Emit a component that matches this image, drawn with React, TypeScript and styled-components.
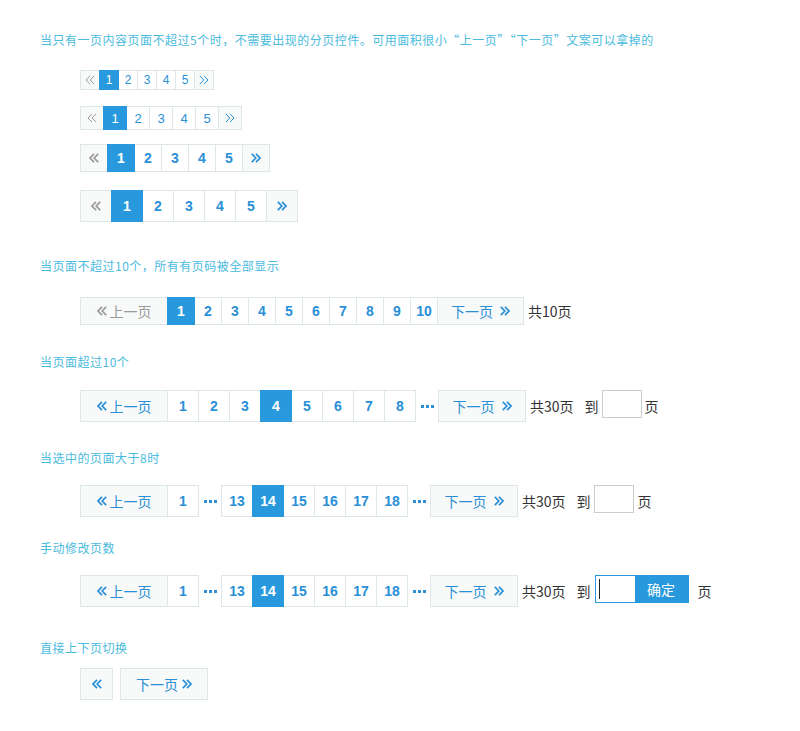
import React from 'react';
import styled, { createGlobalStyle } from 'styled-components';

const BLUE = '#2899dd';
const NUM = '#2a8fd6';
const BORDER = '#dde6e9';
const NAVBG = '#f8f9f9';
const GRAY = '#9a9a9a';
const TITLE = '#4abbdd';
const CJK = '"Noto Sans CJK SC", "Liberation Sans", sans-serif';
const LATIN = '"Liberation Sans", "Noto Sans CJK SC", sans-serif';

const GlobalStyle = createGlobalStyle`
  html, body { margin: 0; padding: 0; background: #fff; }
  body { font-family: ${LATIN}; }
`;

type SizeKey = 'xs' | 'sm' | 'md' | 'lg';
const S: Record<SizeKey, { h: number; fs: number; bold: boolean; sw: number }> = {
  xs: { h: 20, fs: 12, bold: false, sw: 1 },
  sm: { h: 24, fs: 13, bold: false, sw: 1 },
  md: { h: 28, fs: 14, bold: true, sw: 1.7 },
  lg: { h: 32, fs: 14, bold: true, sw: 1.7 },
};

const Page = styled.div`
  padding: 30px 0 30px 40px;
  display: flex;
  flex-direction: column;
  align-items: flex-start;
`;

const Title = styled.div<{ $top: number }>`
  margin-top: ${p => p.$top}px;
  height: 20px;
  line-height: 20px;
  font-family: ${CJK};
  font-size: 12px;
  letter-spacing: 0.5px;
  color: ${TITLE};
  white-space: nowrap;
`;

const Pager = styled.div<{ $top: number; $gap?: number }>`
  margin-top: ${p => p.$top}px;
  margin-left: 40px;
  display: flex;
  align-items: center;
  gap: ${p => p.$gap ?? 0}px;
`;

const Cell = styled.span<{ $size: SizeKey; $active?: boolean; $w?: number }>`
  box-sizing: border-box;
  display: inline-flex;
  align-items: center;
  justify-content: center;
  flex: none;
  height: ${p => S[p.$size].h}px;
  width: ${p => p.$w ?? S[p.$size].h}px;
  border: 1px solid ${p => (p.$active ? BLUE : BORDER)};
  background: ${p => (p.$active ? BLUE : '#fff')};
  color: ${p => (p.$active ? '#fff' : NUM)};
  font-family: ${LATIN};
  font-size: ${p => S[p.$size].fs}px;
  font-weight: ${p => (S[p.$size].bold ? 700 : 400)};
  position: relative;
  z-index: ${p => (p.$active ? 1 : 0)};
  & + & { margin-left: -1px; }
`;

const Nav = styled(Cell)<{ $disabled?: boolean; $solo?: boolean }>`
  background: ${NAVBG};
  color: ${p => (p.$disabled ? GRAY : NUM)};
  font-family: ${CJK};
  font-weight: 400;
  font-size: 14px;
  gap: ${p => (p.$solo ? 0 : 3)}px;
  & + & { margin-left: ${p => (p.$solo ? 0 : -1)}px; }
`;

const NextLabel = styled.span`
  margin-right: 4px;
`;

const Ellipsis = styled.span`
  box-sizing: border-box;
  flex: none;
  width: 22px;
  display: flex;
  align-items: center;
  justify-content: center;
  gap: 2px;
  padding-left: 1px;
`;

const Dot = styled.span`
  width: 3px;
  height: 3px;
  background: ${NUM};
`;

const Info = styled.span<{ $ml: number }>`
  margin-left: ${p => p.$ml}px;
  font-family: ${CJK};
  font-size: 14px;
  color: #333;
  white-space: nowrap;
`;

const GotoBox = styled.span`
  box-sizing: border-box;
  align-self: flex-start;
  margin-left: 3px;
  width: 40px;
  height: 28px;
  border: 1px solid #cccccc;
  background: #fff;
`;

const GotoGroup = styled.span`
  box-sizing: border-box;
  align-self: flex-start;
  margin-left: 4px;
  display: flex;
  height: 28px;
  border: 1px solid ${BLUE};
`;

const GotoField = styled.span`
  width: 39px;
  background: #fff;
  display: flex;
  align-items: center;
`;

const Caret = styled.span`
  width: 1px;
  height: 20px;
  margin-left: 3px;
  background: #222;
`;

const Confirm = styled.span`
  width: 53px;
  background: ${BLUE};
  color: #fff;
  font-family: ${CJK};
  font-size: 14px;
  display: flex;
  align-items: center;
  justify-content: center;
`;

const Chevrons: React.FC<{ dir: 'l' | 'r'; sw: number }> = ({ dir, sw }) => (
  <svg width="10" height="10" viewBox="0 0 10 10" fill="none" stroke="currentColor" strokeWidth={sw} strokeLinejoin="miter">
    {dir === 'l' ? (
      <>
        <polyline points="5,0.8 1,5 5,9.2" />
        <polyline points="9.2,0.8 5.2,5 9.2,9.2" />
      </>
    ) : (
      <>
        <polyline points="0.8,0.8 4.8,5 0.8,9.2" />
        <polyline points="5,0.8 9,5 5,9.2" />
      </>
    )}
  </svg>
);

const Dots: React.FC = () => (
  <Ellipsis>
    <Dot />
    <Dot />
    <Dot />
  </Ellipsis>
);

const SimplePager: React.FC<{ size: SizeKey; top: number }> = ({ size, top }) => (
  <Pager $top={top}>
    <Nav $size={size} $disabled>
      <Chevrons dir="l" sw={S[size].sw} />
    </Nav>
    {[1, 2, 3, 4, 5].map(n => (
      <Cell key={n} $size={size} $active={n === 1}>
        {n}
      </Cell>
    ))}
    <Nav $size={size}>
      <Chevrons dir="r" sw={S[size].sw} />
    </Nav>
  </Pager>
);

const Prev: React.FC<{ disabled?: boolean }> = ({ disabled }) => (
  <Nav $size="lg" $w={88} $disabled={disabled}>
    <Chevrons dir="l" sw={1.7} />
    <span>上一页</span>
  </Nav>
);

const Next: React.FC = () => (
  <Nav $size="lg" $w={88}>
    <NextLabel>下一页</NextLabel>
    <Chevrons dir="r" sw={1.7} />
  </Nav>
);

const Nums: React.FC<{ list: number[]; active: number; size: SizeKey }> = ({ list, active, size }) => (
  <>
    {list.map(n => (
      <Cell key={n} $size={size} $active={n === active}>
        {n}
      </Cell>
    ))}
  </>
);

export default function App() {
  return (
    <>
      <GlobalStyle />
      <Page>
        <Title $top={0}>当只有一页内容页面不超过5个时，不需要出现的分页控件。可用面积很小“上一页”“下一页”文案可以拿掉的</Title>
        <SimplePager size="xs" top={20} />
        <SimplePager size="sm" top={16} />
        <SimplePager size="md" top={14} />
        <SimplePager size="lg" top={18} />

        <Title $top={34}>当页面不超过10个，所有有页码被全部显示</Title>
        <Pager $top={21}>
          <Nav $size="md" $w={88} $disabled>
            <Chevrons dir="l" sw={1.7} />
            <span>上一页</span>
          </Nav>
          <Nums list={[1, 2, 3, 4, 5, 6, 7, 8, 9, 10]} active={1} size="md" />
          <Nav $size="md" $w={87}>
            <NextLabel>下一页</NextLabel>
            <Chevrons dir="r" sw={1.7} />
          </Nav>
          <Info $ml={4}>共10页</Info>
        </Pager>

        <Title $top={27}>当页面超过10个</Title>
        <Pager $top={18}>
          <Prev />
          <Nums list={[1, 2, 3, 4, 5, 6, 7, 8]} active={4} size="lg" />
          <Dots />
          <Next />
          <Info $ml={4}>共30页</Info>
          <Info $ml={11}>到</Info>
          <GotoBox />
          <Info $ml={3}>页</Info>
        </Pager>

        <Title $top={26}>当选中的页面大于8时</Title>
        <Pager $top={17}>
          <Prev />
          <Nums list={[1]} active={14} size="lg" />
          <Dots />
          <Nums list={[13, 14, 15, 16, 17, 18]} active={14} size="lg" />
          <Dots />
          <Next />
          <Info $ml={4}>共30页</Info>
          <Info $ml={11}>到</Info>
          <GotoBox />
          <Info $ml={4}>页</Info>
        </Pager>

        <Title $top={21}>手动修改页数</Title>
        <Pager $top={17}>
          <Prev />
          <Nums list={[1]} active={14} size="lg" />
          <Dots />
          <Nums list={[13, 14, 15, 16, 17, 18]} active={14} size="lg" />
          <Dots />
          <Next />
          <Info $ml={4}>共30页</Info>
          <Info $ml={11}>到</Info>
          <GotoGroup>
            <GotoField>
              <Caret />
            </GotoField>
            <Confirm>确定</Confirm>
          </GotoGroup>
          <Info $ml={9}>页</Info>
        </Pager>

        <Title $top={31}>直接上下页切换</Title>
        <Pager $top={10} $gap={7}>
          <Nav $size="lg" $w={33} $solo>
            <Chevrons dir="l" sw={1.7} />
          </Nav>
          <Nav $size="lg" $w={88} $solo>
            <NextLabel>下一页</NextLabel>
            <Chevrons dir="r" sw={1.7} />
          </Nav>
        </Pager>
      </Page>
    </>
  );
}
